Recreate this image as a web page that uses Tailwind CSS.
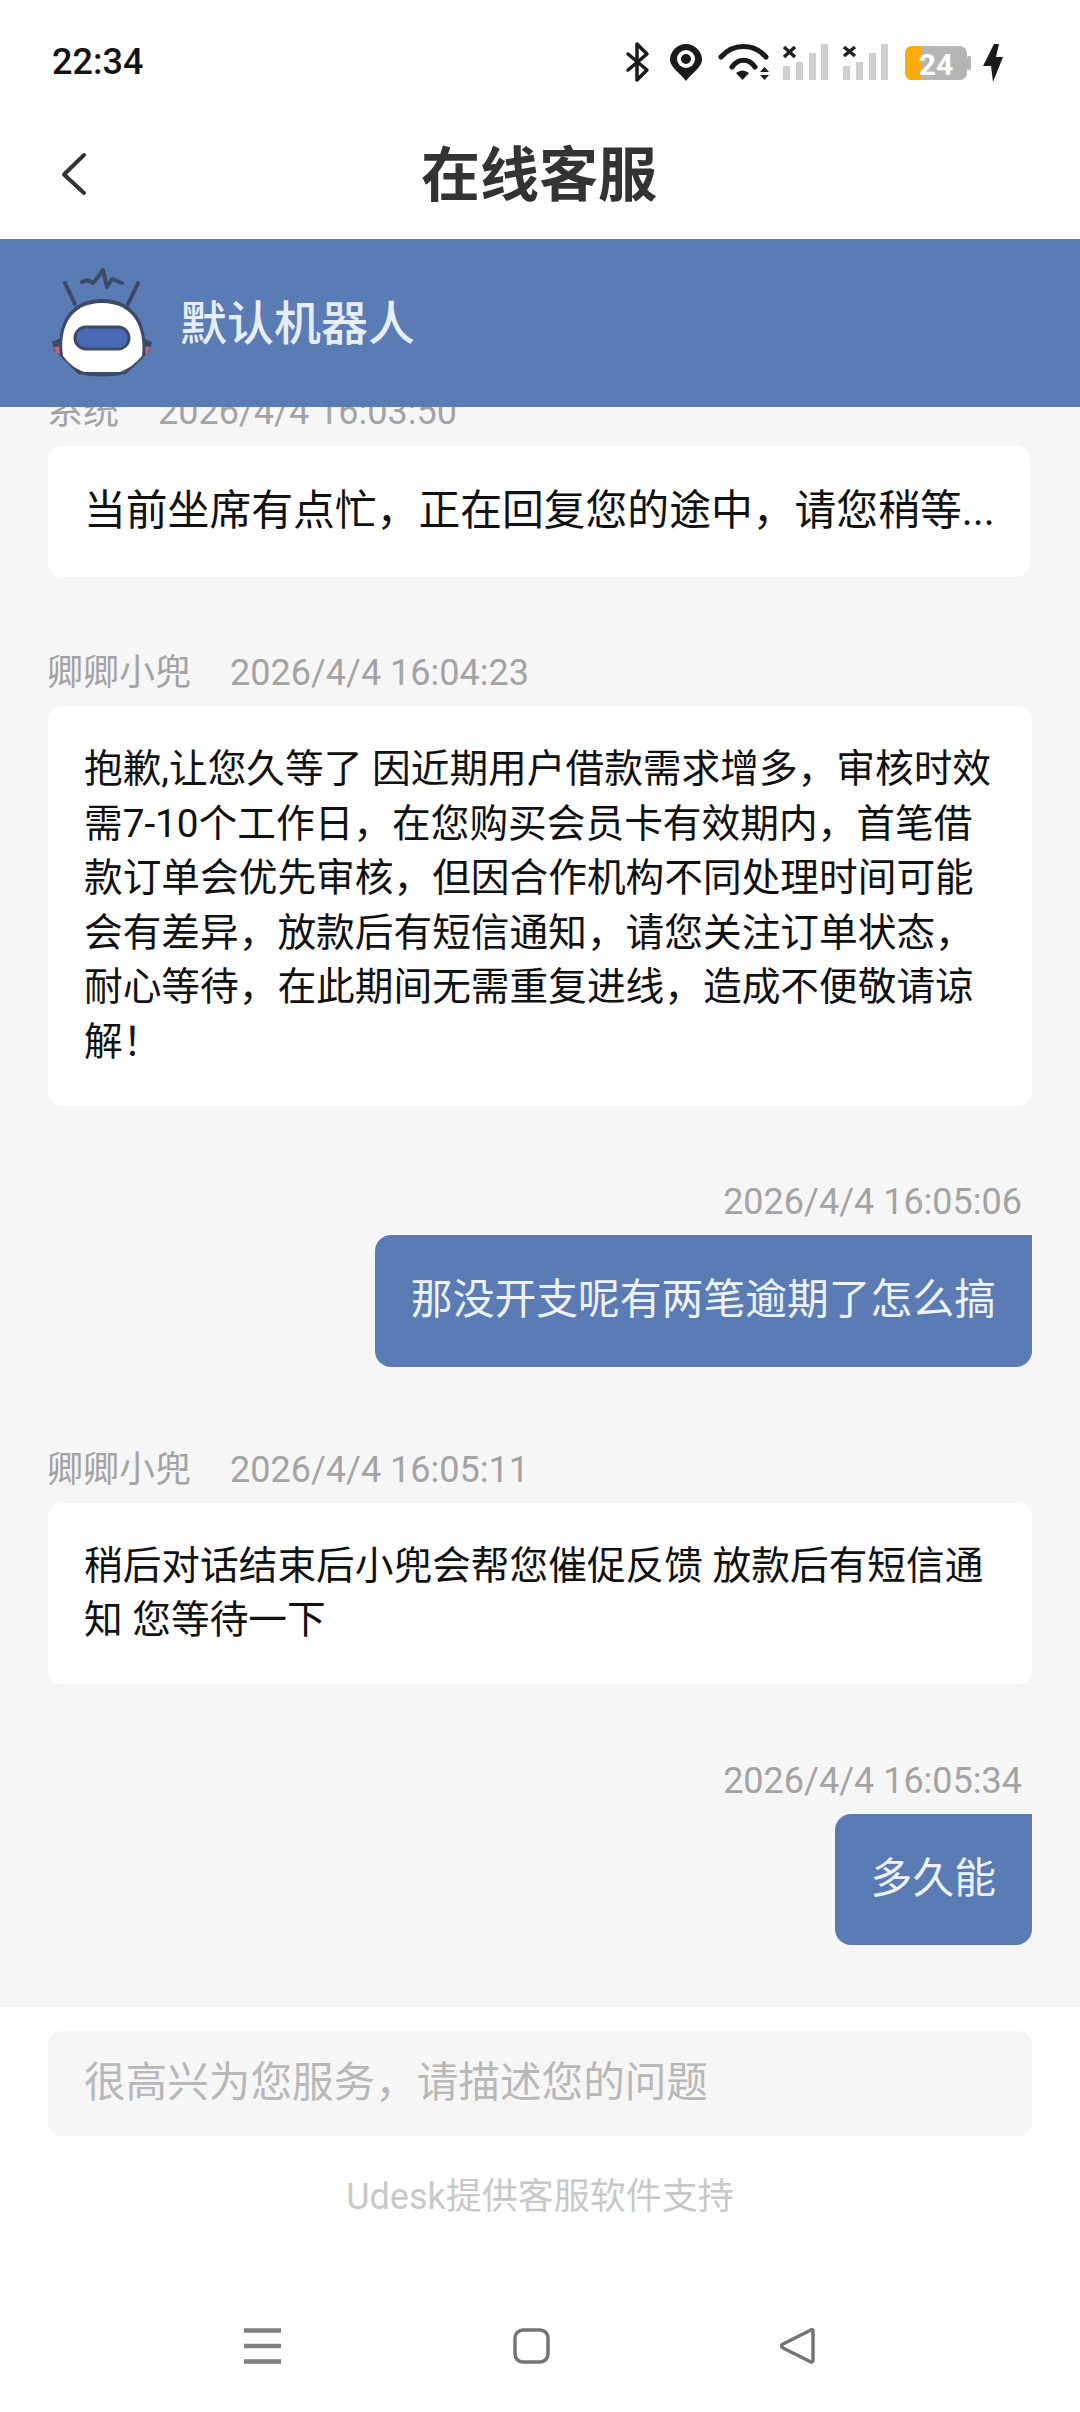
<!DOCTYPE html>
<html lang="zh-CN">

<head>
    <meta charset="UTF-8">
    <meta name="viewport" content="width=device-width, initial-scale=1.0">
    <title>在线客服</title>
    <script src="https://cdn.jsdelivr.net/npm/@tailwindcss/browser@4"></script>
</head>

<body class="bg-white">
    <div class="w-[1080px] h-[2412px] flex flex-col overflow-hidden bg-white font-['Roboto','Noto_Sans_CJK_SC',sans-serif]">
        <!-- Status bar -->
        <div class="h-[120px] pt-[20px] flex justify-between items-start shrink-0">
            <div class="ml-[52px] mt-[7px] text-[36px] leading-[70px] font-medium text-[#141414]">22:34</div>
            <svg class="mr-[60px]" width="420" height="70" viewBox="0 0 420 70">
                <path d="M28 34 L47 50 L37 60 V24 L47 34 L28 50" fill="none" stroke="#1a1a1a" stroke-width="3.5" stroke-linecap="round" stroke-linejoin="round"/>
                <path d="M86 61 C80 53 70 47 70 40 A16 16 0 0 1 102 40 C102 47 92 53 86 61Z" fill="#1a1a1a"/>
                <circle cx="86" cy="39" r="9" fill="#fff"/>
                <circle cx="86" cy="39" r="5" fill="#1a1a1a"/>
                <path d="M121 37 C133 23 154 23 166 37 M132 47 C138 38 149 38 155 47" fill="none" stroke="#1a1a1a" stroke-width="5" stroke-linecap="round"/>
                <path d="M136 53 Q142.500 48 149 53 L142.500 60Z M160 52 L169 52 L164.500 47Z M160 55 L169 55 L164.500 60Z" fill="#1a1a1a"/>
                <path d="M184 27 L195 37 M195 27 L184 37 M244 27 L255 36 M255 27 L244 36" stroke="#222" stroke-width="3.500"/>
                <g fill="#cfcfcf">
                    <rect x="183" y="46" width="7" height="14"/>
                    <rect x="196" y="42" width="7" height="18"/>
                    <rect x="209" y="33" width="7" height="27"/>
                    <rect x="221" y="24" width="7" height="36"/>
                    <rect x="243" y="46" width="7" height="14"/>
                    <rect x="256" y="42" width="7" height="18"/>
                    <rect x="269" y="33" width="7" height="27"/>
                    <rect x="281" y="24" width="7" height="36"/>
                </g>
                <rect x="305" y="26" width="62" height="34" rx="7" fill="#b5b5b5"/>
                <path d="M312 26 H321 V60 H312 A7 7 0 0 1 305 53 V33 A7 7 0 0 1 312 26Z" fill="#fbab0a"/>
                <rect x="367" y="36" width="4" height="14" rx="1.500" fill="#b5b5b5"/>
                <text x="336" y="55" text-anchor="middle" font-family="Roboto" font-weight="700" font-size="30" fill="#fff">24</text>
                <path d="M394 24 L383 46 H391 L393 62 L403 37 H396 L399 24Z" fill="#1a1a1a"/>
            </svg>
        </div>

        <!-- Title -->
        <div class="h-[119px] relative flex items-center justify-center shrink-0">
            <svg class="absolute left-[60px] top-[32px]" width="28" height="44" viewBox="0 0 28 44">
                <path d="M24 3 L4 22.500 L24 41" fill="none" stroke="#333" stroke-width="4" stroke-linecap="round" stroke-linejoin="round"/>
            </svg>
            <div class="text-[59px] font-bold text-[#333] leading-none -mt-[8px] -ml-[2px]">在线客服</div>
        </div>

        <!-- Robot header -->
        <div class="h-[168px] bg-[#5b7bb5] flex items-center pl-[46px] gap-[22px] shrink-0 relative z-10">
            <svg width="112" height="112" viewBox="16 17 112 112">
                <path d="M35 33 L45 54 M108 33 L98 54" stroke="#3a4a68" stroke-width="4" stroke-linecap="round"/>
                <path d="M52 32 L58 30 L63 33 L68 27 L73 20 L77 37 L82 29 L92 33" fill="none" stroke="#3a4a68" stroke-width="4" stroke-linecap="round" stroke-linejoin="round"/>
                <path d="M22 92 L31 88 L32 106 L25 102Z M122 92 L113 88 L112 106 L119 102Z" fill="#3a4a68"/>
                <path d="M24 97 L31 96 L32 104 L26 103Z M120 97 L113 96 L112 104 L118 103Z" fill="#d0606e"/>
                <path d="M30 106 C26 76 38 49 72 49 C106 49 118 76 115 106 L96 124 Q72 129 48 124Z" fill="#3a4a68"/>
                <path d="M33 106 C29 78 40 53 72 53 C104 53 115 78 112 106 C105 114 98 119 90 122 H54 C46 119 39 114 33 106Z" fill="#fff"/>
                <rect x="45" y="77" width="54" height="22" rx="11" fill="#4a6ab5" stroke="#3a4a68" stroke-width="3"/>
            </svg>
            <div class="text-[47px] leading-none text-[#e6eefa] font-medium">默认机器人</div>
        </div>

        <!-- Messages -->
        <div class="flex-1 min-h-0 bg-[#f6f6f6] overflow-hidden px-[48px]">
            <div class="-mt-[18px] h-[46px] leading-[46px] text-[36px] text-[#a3a3a3] flex gap-[39px]">
                <span class="-ml-px">系统</span><span>2026/4/4 16:03:50</span>
            </div>
            <div class="mt-[11px] w-[982px] h-[131px] flex items-center bg-white rounded-[14px] px-[36px] text-[41.800px] text-[#111] whitespace-nowrap">
                当前坐席有点忙，正在回复您的途中，请您稍等...
            </div>

            <div class="mt-[73px] h-[46px] leading-[46px] text-[36px] text-[#a3a3a3] flex gap-[39px]">
                <span class="-ml-px">卿卿小兜</span><span>2026/4/4 16:04:23</span>
            </div>
            <div class="mt-[10px] bg-white rounded-[14px] px-[36px] py-[36px] text-[38.700px] leading-[54.600px] text-[#111] whitespace-nowrap">
                抱歉,让您久等了 因近期用户借款需求增多，审核时效<br>
                需7-10个工作日，在您购买会员卡有效期内，首笔借<br>
                款订单会优先审核，但因合作机构不同处理时间可能<br>
                会有差异，放款后有短信通知，请您关注订单状态，<br>
                耐心等待，在此期间无需重复进线，造成不便敬请谅<br>
                解！
            </div>

            <div class="mt-[73px] h-[46px] leading-[46px] text-[36px] text-[#a3a3a3] text-right pr-[10px]">2026/4/4 16:05:06</div>
            <div class="mt-[10px] flex justify-end">
                <div class="h-[132px] flex items-center bg-[#5b7bb5] rounded-[16px] rounded-tr-none px-[36px] text-[41.800px] text-[#eef3fb] whitespace-nowrap">那没开支呢有两笔逾期了怎么搞</div>
            </div>

            <div class="mt-[80px] h-[46px] leading-[46px] text-[36px] text-[#a3a3a3] flex gap-[39px]">
                <span class="-ml-px">卿卿小兜</span><span>2026/4/4 16:05:11</span>
            </div>
            <div class="mt-[10px] bg-white rounded-[14px] px-[36px] py-[36px] text-[38.700px] leading-[54.600px] text-[#111] whitespace-nowrap">
                稍后对话结束后小兜会帮您催促反馈 放款后有短信通<br>
                知 您等待一下
            </div>

            <div class="mt-[74px] h-[46px] leading-[46px] text-[36px] text-[#a3a3a3] text-right pr-[10px]">2026/4/4 16:05:34</div>
            <div class="mt-[10px] flex justify-end">
                <div class="h-[131px] flex items-center bg-[#5b7bb5] rounded-[16px] rounded-tr-none px-[36px] text-[41.800px] text-[#eef3fb] whitespace-nowrap">多久能</div>
            </div>
        </div>

        <!-- Input + footer -->
        <div class="h-[405px] shrink-0 bg-white px-[48px] pt-[24px] flex flex-col">
            <div class="h-[105px] bg-[#f6f6f6] rounded-[14px] px-[36px] flex items-center text-[41.600px] text-[#b8b8b8]">很高兴为您服务，请描述您的问题</div>
            <div class="mt-[38px] text-center text-[36px] leading-[46px] text-[#c8c8c8]">Udesk提供客服软件支持</div>
            <div class="mt-[108px] relative h-[40px]">
                <svg class="absolute left-[196px] top-0" width="38" height="36" viewBox="0 0 38 36">
                    <path d="M0 2.500 H37 M0 18 H37 M0 33.500 H37" stroke="#808080" stroke-width="4.500"/>
                </svg>
                <svg class="absolute left-[465px] top-0" width="37" height="36" viewBox="0 0 37 36">
                    <rect x="2" y="2" width="33" height="32" rx="8" fill="none" stroke="#747474" stroke-width="3.500"/>
                </svg>
                <svg class="absolute left-[732px] top-0" width="36" height="36" viewBox="0 0 36 36">
                    <path d="M33 3 V32 C33 34 31 34.500 30 33.500 L3 20 C1 19 1 17 3 16 L30 2.500 C31 1.500 33 1.500 33 3Z" fill="none" stroke="#747474" stroke-width="3.500" stroke-linejoin="round"/>
                </svg>
            </div>
        </div>
    </div>
</body>

</html>
